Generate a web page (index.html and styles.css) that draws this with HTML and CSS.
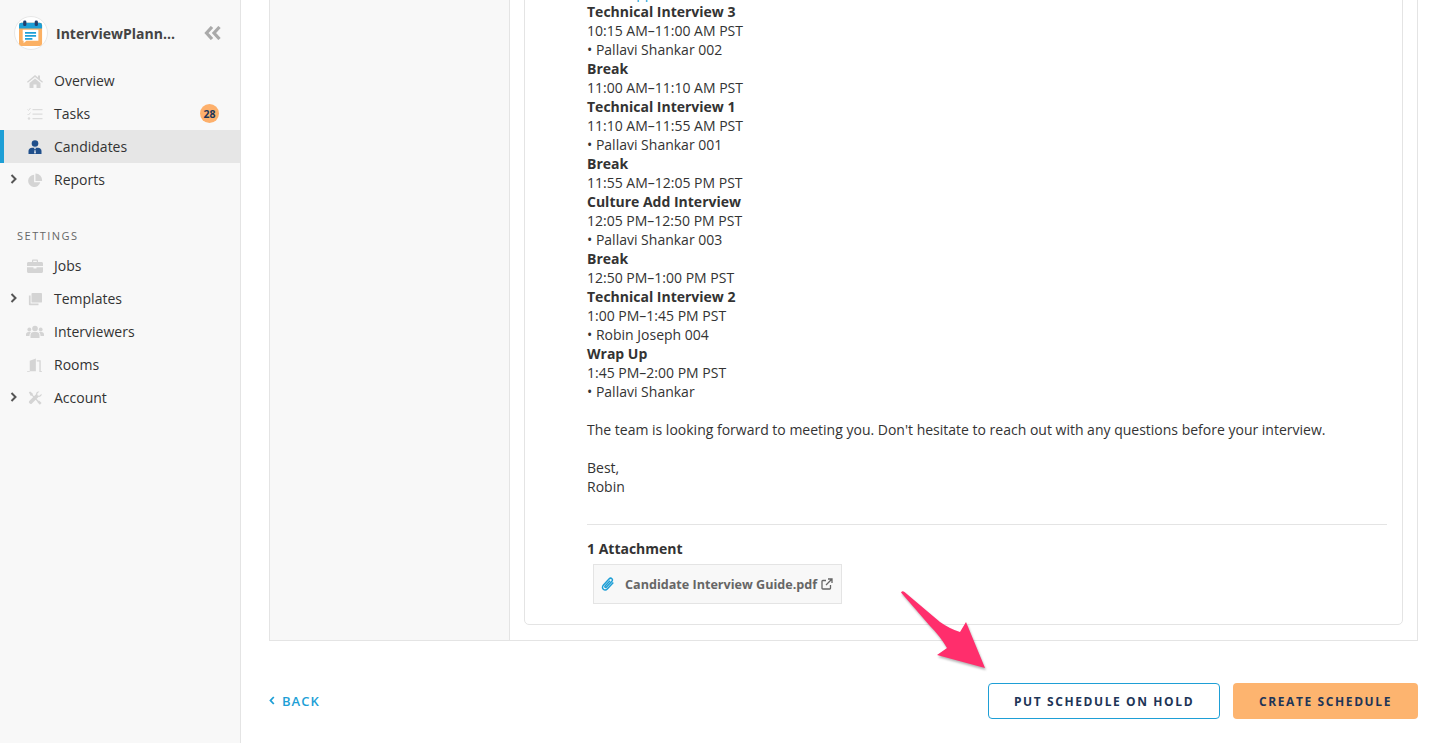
FILE: index.html
```html
<!DOCTYPE html>
<html lang="en">
<head>
<meta charset="utf-8">
<title>InterviewPlanner</title>
<link rel="stylesheet" href="styles.css">
</head>
<body>
<div class="app">
  <aside class="sidebar">
    <div class="brand">
      <span class="logo">
        <svg width="26" height="28" viewBox="0 0 26 28">
          <rect x="0" y="3" width="25" height="25" rx="2.5" fill="#fbb063"/>
          <path d="M0 9V5.500A2.500 2.500 0 0 1 2.500 3h20A2.500 2.500 0 0 1 25 5.500V9z" fill="#1e9fd6"/>
          <rect x="4.500" y="0.500" width="3.500" height="6" rx="1.500" fill="#1f3f6e"/>
          <rect x="17" y="0.500" width="3.500" height="6" rx="1.500" fill="#1f3f6e"/>
          <path d="M4 10.500h17v12H8L5 25v-2.500H4z" fill="#fff"/>
          <path d="M6.500 13h12v1.800h-12zM6.500 16.200h12V18h-12zM6.500 19.400h8v1.800h-8z" fill="#1e9fd6"/>
        </svg>
      </span>
      <span class="brand-name">InterviewPlann...</span>
      <svg class="collapse" width="18" height="14" viewBox="0 0 18 14"><path d="M8 1 2.500 7 8 13M15.500 1 10 7l5.500 6" fill="none" stroke="#aaa" stroke-width="3.200"/></svg>
    </div>
    <nav class="nav">
      <a class="item"><span class="chev"></span><svg class="ico" viewBox="0 0 16 14"><path d="M8 1 0 7.800l.8.900L8 3l7.200 5.700.8-.9-3-2.500V1.500h-2v2.100zM2.500 9v5h4v-3.500h3V14h4V9L8 4.500z" fill="#d4d4d4"/></svg><span class="label">Overview</span></a>
      <a class="item"><span class="chev"></span><svg class="ico" viewBox="0 0 16 14"><path d="M5.500 2h10v1.200h-10zM5.500 6.500h10v1.200h-10zM5.500 11h10v1.200h-10z" fill="#dcdcdc"/><path d="M.5 2.500 1.500 3.500 3.500 1M.5 7 1.500 8 3.500 5.500" fill="none" stroke="#dcdcdc" stroke-width="1"/><circle cx="2" cy="11.500" r="1.200" fill="#dcdcdc"/></svg><span class="label">Tasks</span><span class="badge">28</span></a>
      <a class="item active"><span class="chev"></span><svg class="ico" viewBox="0 0 14 14"><circle cx="7" cy="3.500" r="3.300" fill="#1f4f8b"/><path d="M.5 14v-3c0-2 1.500-3 3.500-3.200h6c2 .2 3.500 1.200 3.500 3.200v3z" fill="#1f4f8b"/><path d="M5.800 7.800h2.400L7 9.200zM6.700 9.800h.6l.5 3.200-.8.700-.8-.7z" fill="#fff"/></svg><span class="label">Candidates</span></a>
      <a class="item"><span class="chev">
        <svg width="7" height="10" viewBox="0 0 7 10"><path d="M1.500 1 5.500 5 1.500 9" fill="none" stroke="#555" stroke-width="2"/></svg></span><svg class="ico" viewBox="0 0 16 16"><path d="M7 2a7 7 0 1 0 7 8.500H7z" fill="#d4d4d4"/><path d="M8.500 .5v8.500H16A7.500 7.500 0 0 0 8.500 .5z" fill="#d4d4d4"/></svg><span class="label">Reports</span></a>
    </nav>
    <div class="section">SETTINGS</div>
    <nav class="nav">
      <a class="item"><span class="chev"></span><svg class="ico" viewBox="0 0 16 14"><path d="M5 3V1.500C5 1 5.500.5 6 .5h4c.5 0 1 .5 1 1V3h3.500c.8 0 1.500.6 1.500 1.400V7H0V4.400C0 3.600.7 3 1.500 3zM6.200 1.700V3h3.600V1.700zM0 8.200h6.500v1.300h3V8.200H16v4.300c0 .8-.7 1.500-1.500 1.500h-13C.7 14 0 13.300 0 12.500z" fill="#d4d4d4"/></svg><span class="label">Jobs</span></a>
      <a class="item"><span class="chev">
        <svg width="7" height="10" viewBox="0 0 7 10"><path d="M1.500 1 5.500 5 1.500 9" fill="none" stroke="#555" stroke-width="2"/></svg></span><svg class="ico" viewBox="0 0 16 16"><rect x="4" y="1" width="12" height="11" rx="1" fill="#d4d4d4"/><path d="M3 4v9h9v2H2c-.6 0-1-.4-1-1V4z" fill="#d4d4d4"/></svg><span class="label">Templates</span></a>
      <a class="item"><span class="chev"></span><svg class="ico ico-wide" viewBox="0 0 18 14"><circle cx="9" cy="3.500" r="2.800" fill="#d4d4d4"/><circle cx="3.300" cy="4.500" r="1.900" fill="#d4d4d4"/><circle cx="14.700" cy="4.500" r="1.900" fill="#d4d4d4"/><path d="M4.500 13V10c0-2 1.500-3 3-3h3c1.500 0 3 1 3 3v3zM0 11V9.500C0 8 1 7 2.500 7H5C4 8 3.500 9 3.500 11zM18 11V9.500C18 8 17 7 15.500 7H13c1 1 1.500 2 1.500 4z" fill="#d4d4d4"/></svg><span class="label">Interviewers</span></a>
      <a class="item"><span class="chev"></span><svg class="ico ico-wide" viewBox="0 0 18 16"><path d="M3 15V3l7-2.500V15zM11 2.500h4.500V15H17v1h-3V4h-3zM0 15h3v1H0z" fill="#d4d4d4"/></svg><span class="label">Rooms</span></a>
      <a class="item"><span class="chev">
        <svg width="7" height="10" viewBox="0 0 7 10"><path d="M1.500 1 5.500 5 1.500 9" fill="none" stroke="#555" stroke-width="2"/></svg></span><svg class="ico" viewBox="0 0 16 16"><path d="M1 1.500 2.500.5l3 2.500v1.500L12 11l1 .2 2.500 2.500-2 2-2.500-2.500-.2-1L4.500 5.500H3z" fill="#d4d4d4"/><path d="M15.500 3.200 13 5.500l-2-.5-.5-2L13 .7c-2-.7-4 .8-3.800 3l-8 8c-1 1.500 1.500 4 3 3l8-8c2 .3 3.800-1.500 3.300-3.500z" fill="#d4d4d4"/></svg><span class="label">Account</span></a>
    </nav>
  </aside>
  <main class="main">
    <section class="panel">
      <div class="panel-side"></div>
      <div class="panel-body">
        <article class="card">
          <div class="message">
            <p class="line"><a class="link">Zoom app</a></p>
            <p class="line strong">Technical Interview 3</p>
            <p class="line">10:15 AM–11:00 AM PST</p>
            <p class="line">• Pallavi Shankar 002</p>
            <p class="line strong">Break</p>
            <p class="line">11:00 AM–11:10 AM PST</p>
            <p class="line strong">Technical Interview 1</p>
            <p class="line">11:10 AM–11:55 AM PST</p>
            <p class="line">• Pallavi Shankar 001</p>
            <p class="line strong">Break</p>
            <p class="line">11:55 AM–12:05 PM PST</p>
            <p class="line strong">Culture Add Interview</p>
            <p class="line">12:05 PM–12:50 PM PST</p>
            <p class="line">• Pallavi Shankar 003</p>
            <p class="line strong">Break</p>
            <p class="line">12:50 PM–1:00 PM PST</p>
            <p class="line strong">Technical Interview 2</p>
            <p class="line">1:00 PM–1:45 PM PST</p>
            <p class="line">• Robin Joseph 004</p>
            <p class="line strong">Wrap Up</p>
            <p class="line">1:45 PM–2:00 PM PST</p>
            <p class="line">• Pallavi Shankar</p>
            <p class="line gap">The team is looking forward to meeting you. Don't hesitate to reach out with any questions before your interview.</p>
            <p class="line gap">Best,</p>
            <p class="line">Robin</p>
          </div>
          <div class="attachments">
            <p class="line strong">1 Attachment</p>
            <div class="file">
              <svg class="clip" width="14" height="15" viewBox="0 0 14 15"><path d="M12.300 5.500 6.500 11.800c-1.200 1.300-3 1.500-4.200.4-1.200-1.100-1-2.900.2-4.200L8 2c.9-.9 2.100-1 2.900-.3.800.7.700 1.900-.2 2.800L5.500 10c-.4.500-1 .6-1.400.2-.4-.4-.3-1 .2-1.500L9 3.700" fill="none" stroke="#1e9fd6" stroke-width="1.500"/></svg>
              <span class="file-name">Candidate Interview Guide.pdf</span>
              <svg class="ext" width="12" height="12" viewBox="0 0 12 12"><path d="M9.500 7v3.200c0 .5-.4.800-.8.800H1.800c-.4 0-.8-.3-.8-.8V3.300c0-.5.400-.8.800-.8H5M7 1h4v4M11 1 5 7" fill="none" stroke="#666" stroke-width="1.300"/></svg>
            </div>
          </div>
        </article>
      </div>
    </section>
    <footer class="actions">
      <a class="back"><svg width="6" height="9" viewBox="0 0 6 9"><path d="M4.800 1 1.500 4.500l3.300 3.500" fill="none" stroke="#1e9fd6" stroke-width="1.800"/></svg>BACK</a>
      <div class="buttons">
        <button class="btn btn-outline">PUT SCHEDULE ON HOLD</button>
        <button class="btn btn-primary">CREATE SCHEDULE</button>
      </div>
    </footer>
  </main>
</div>
<svg class="arrow" width="100" height="90" viewBox="0 0 100 90"><path d="M1 2.500C2 1 3 1 4.500 2L40 32Q50 39 60 42L66 32 85 78 37 65 47 58Q40 46 30 36z" fill="#ff2e6c"/></svg>
</body>
</html>
```

FILE: styles.css
```css
* { box-sizing: border-box; }
html, body { margin: 0; height: 100%; overflow: hidden; }
body { font-family: "Open Sans", sans-serif; color: #333; background: #fff; position: relative; }
.app { display: flex; height: 743px; }
.sidebar { width: 241px; flex: none; background: #f8f8f8; border-right: 1px solid #e4e4e4; padding-top: 16px; }
.brand { display: flex; align-items: center; height: 34px; padding-left: 14px; }
.logo { width: 34px; height: 34px; border-radius: 50%; background: #fff; border: 1px solid #e8e8e8; display: flex; align-items: center; justify-content: center; flex: none; }
.logo svg { width: 24px; height: 26px; }
.brand-name { margin-left: 8px; font-size: 14px; font-weight: 700; color: #444; white-space: nowrap; }
.collapse { margin-left: 29px; }
.nav { display: flex; flex-direction: column; }
.brand + .nav { margin-top: 14px; }
.item { display: flex; align-items: center; height: 33px; padding-left: 10px; font-size: 14px; color: #333; position: relative; }
.item.active { background: #e6e6e6; }
.item.active::before { content: ""; position: absolute; left: 0; top: 0; bottom: 0; width: 4px; background: #1e9fd6; }
.chev { width: 7px; height: 10px; display: flex; flex: none; margin-top: -1px; }
.ico { width: 16px; height: 14px; margin-left: 10px; flex: none; }
.ico-wide { width: 18px; margin-left: 9px; margin-right: -1px; }
.label { margin-left: 11px; }
.badge { margin-left: auto; margin-right: 21px; width: 19px; height: 19px; border-radius: 50%; background: #fdb06c; color: #1d3557; font-size: 10.500px; font-weight: 700; display: flex; align-items: center; justify-content: center; }
.section { margin: 30px 0 3px 17px; height: 20px; line-height: 20px; font-size: 11px; letter-spacing: 1.500px; color: #666; }
.main { flex: 1; min-width: 0; height: 743px; display: flex; flex-direction: column; justify-content: flex-end; padding: 0 17px 0 28px; overflow: hidden; }
.panel { display: flex; flex: none; background: #f8f8f8; border: 1px solid #e4e4e4; }
.panel-side { width: 240px; flex: none; border-right: 1px solid #e4e4e4; }
.panel-body { flex: 1; min-width: 0; background: #fff; padding: 0 14px 15px; }
.card { border: 1px solid #e4e4e4; border-radius: 5px; padding: 0 15px 20px 62px; }
.line { margin: 0; font-size: 14px; line-height: 19px; color: #333; }
.strong { font-weight: 700; }
.gap { margin-top: 19px; }
.link { color: #1e9fd6; }
.attachments { margin-top: 28px; border-top: 1px solid #e4e4e4; padding-top: 14px; }
.file { display: inline-flex; align-items: center; margin: 6px 0 0 6px; height: 40px; padding: 0 8px 0 7px; background: #f8f8f8; border: 1px solid #e4e4e4; }
.clip { flex: none; }
.file-name { margin-left: 10px; font-size: 12.600px; font-weight: 700; color: #666; }
.ext { margin-left: 4px; flex: none; }
.actions { flex: none; height: 102px; display: flex; align-items: center; justify-content: space-between; padding-top: 17px; }
.back { display: flex; align-items: center; gap: 7px; font-size: 13px; font-weight: 600; letter-spacing: 1px; color: #1e9fd6; }
.buttons { display: flex; gap: 13px; }
.btn { height: 36px; border-radius: 4px; font-family: "Open Sans", sans-serif; font-size: 12px; font-weight: 700; letter-spacing: 1.600px; color: #1d3557; padding: 1px 0 0; }
.btn-outline { width: 232px; background: #fff; border: 1px solid #1e9fd6; }
.btn-primary { width: 185px; background: #fdb46f; border: 0; }
.arrow { position: absolute; left: 900px; top: 590px; filter: drop-shadow(1px 2px 1px rgba(0,0,0,.3)); }
```
